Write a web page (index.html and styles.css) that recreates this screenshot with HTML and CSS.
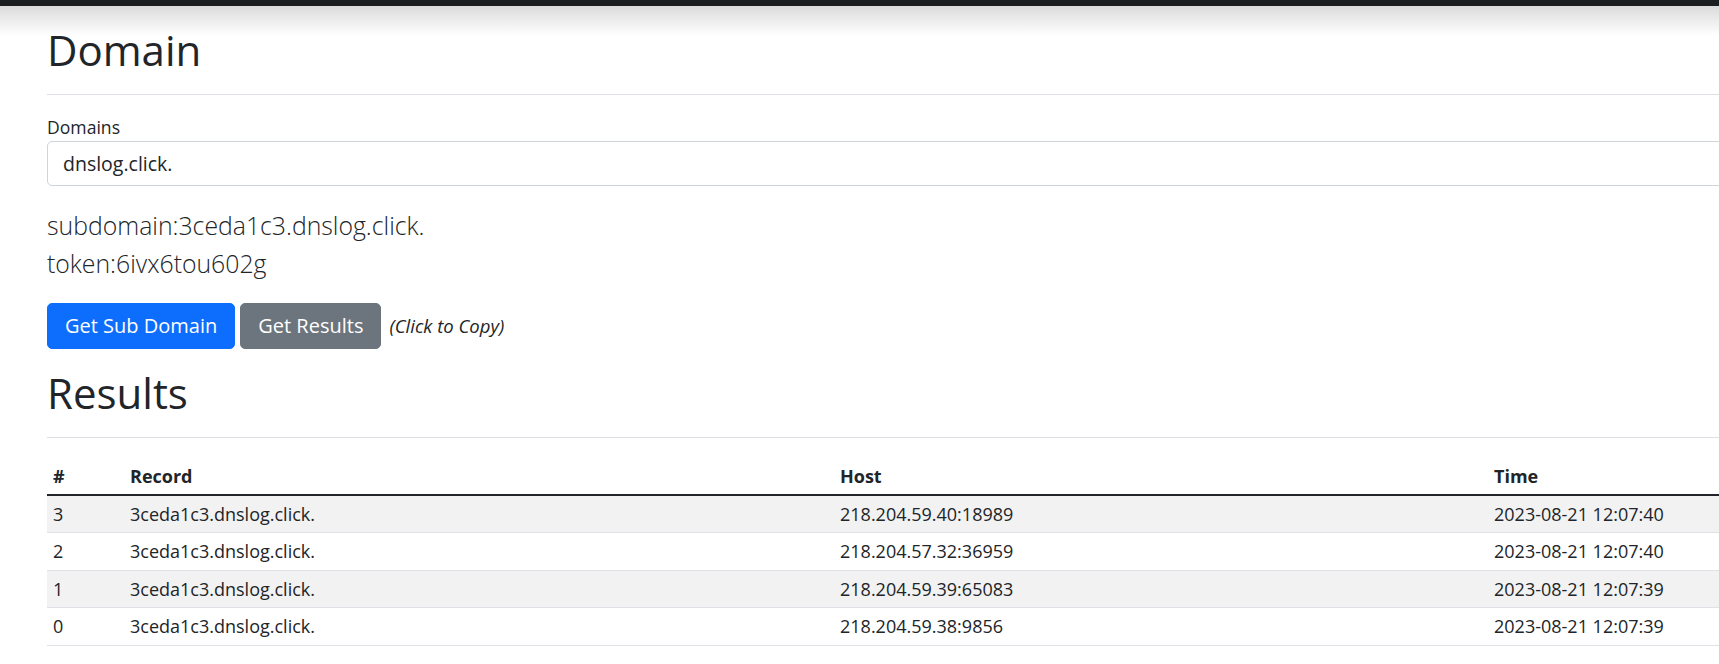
FILE: index.html
```html
<!DOCTYPE html>
<html lang="en">
<head>
    <meta charset="UTF-8">
    <meta name="viewport" content="width=device-width, initial-scale=1.0">
    <title>DNSLog</title>
    <link rel="stylesheet" href="styles.css">
</head>
<body>

    <!-- Top Bar -->
    <div class="topbar"></div>

    <div class="container">
        <h1>Domain</h1>
        <hr>

        <label class="form-label" for="domains">Domains</label>
        <input id="domains" class="form-control" type="text" value="dnslog.click." readonly>

        <div class="info">
            <p class="lead">subdomain:3ceda1c3.dnslog.click.</p>
            <p class="lead">token:6ivx6tou602g</p>
        </div>

        <div class="actions">
            <button class="btn btn-primary">Get Sub Domain</button>
            <button class="btn btn-secondary">Get Results</button>
            <i class="copy-hint">(Click to Copy)</i>
        </div>

        <h1>Results</h1>
        <hr>

        <table class="results">
            <thead>
                <tr>
                    <th class="col-id">#</th>
                    <th class="col-record">Record</th>
                    <th class="col-host">Host</th>
                    <th>Time</th>
                </tr>
            </thead>
            <tbody>
                <tr>
                    <td>3</td>
                    <td>3ceda1c3.dnslog.click.</td>
                    <td>218.204.59.40:18989</td>
                    <td>2023-08-21 12:07:40</td>
                </tr>
                <tr>
                    <td>2</td>
                    <td>3ceda1c3.dnslog.click.</td>
                    <td>218.204.57.32:36959</td>
                    <td>2023-08-21 12:07:40</td>
                </tr>
                <tr>
                    <td>1</td>
                    <td>3ceda1c3.dnslog.click.</td>
                    <td>218.204.59.39:65083</td>
                    <td>2023-08-21 12:07:39</td>
                </tr>
                <tr>
                    <td>0</td>
                    <td>3ceda1c3.dnslog.click.</td>
                    <td>218.204.59.38:9856</td>
                    <td>2023-08-21 12:07:39</td>
                </tr>
            </tbody>
        </table>
    </div>

</body>
</html>
```

FILE: styles.css
```css
/* Global Styles */
html, body {
    overflow-x: hidden;
}

body {
    margin: 0;
    padding: 0;
    font-family: 'Open Sans', 'Noto Sans', sans-serif;
    font-size: 17.6px;
    line-height: 1.5;
    color: #212529;
    background: #fff;
}

/* Top Bar */
.topbar {
    position: relative;
    height: 6px;
    background-color: #1b1e21;
}

.topbar::after {
    content: "";
    position: absolute;
    top: 6px;
    left: 0;
    right: 0;
    height: 30px;
    background: linear-gradient(to bottom, rgba(0, 0, 0, 0.14), rgba(0, 0, 0, 0));
    pointer-events: none;
}

.container {
    width: 2106px;
    padding-left: 47px;
}

h1 {
    font-size: 42px;
    font-weight: 400;
    line-height: 50px;
    margin: 19px 0 0;
}

hr {
    margin: 19px 0 19px;
    border: none;
    border-top: 1px solid #dfdfe6;
}

/* Form */
.form-label {
    display: block;
    margin-bottom: 1px;
}

.form-control {
    display: block;
    box-sizing: border-box;
    width: 100%;
    height: 45px;
    padding: 0 15px;
    font-family: inherit;
    font-size: 19.5px;
    color: #212529;
    border: 1px solid #ced4da;
    border-radius: 5px;
    outline: none;
}

.info {
    margin-top: 21px;
}

.lead {
    margin: 0;
    font-size: 24.8px;
    font-weight: 300;
    line-height: 37.6px;
}

/* Buttons */
.actions {
    display: flex;
    align-items: baseline;
    gap: 5px;
    margin-top: 20px;
}

.btn {
    height: 46px;
    padding: 0 17px;
    font-family: inherit;
    font-size: 20px;
    color: #fff;
    border: 1px solid transparent;
    border-radius: 5px;
    cursor: pointer;
}

.btn-primary {
    background-color: #0d6efd;
    border-color: #0d6efd;
}

.btn-secondary {
    background-color: #6c757d;
    border-color: #6c757d;
}

.copy-hint {
    margin-left: 3px;
    font-size: 18.5px;
}

.actions + h1 {
    margin-top: 19px;
}

/* Results Table */
.results {
    width: 100%;
    margin-top: 20px;
    table-layout: fixed;
    border-collapse: collapse;
    font-size: 18px;
}

.results th,
.results td {
    padding: 5px 6px;
    line-height: 26.4px;
    text-align: left;
}

.results th {
    font-weight: 700;
    border-bottom: 2px solid #212529;
}

.results td {
    border-bottom: 1px solid #dee2e6;
}

.results tbody tr:nth-child(odd) td {
    background-color: #f2f2f2;
}

.col-id {
    width: 65px;
}

.col-record {
    width: 698px;
}

.col-host {
    width: 642px;
}
```
